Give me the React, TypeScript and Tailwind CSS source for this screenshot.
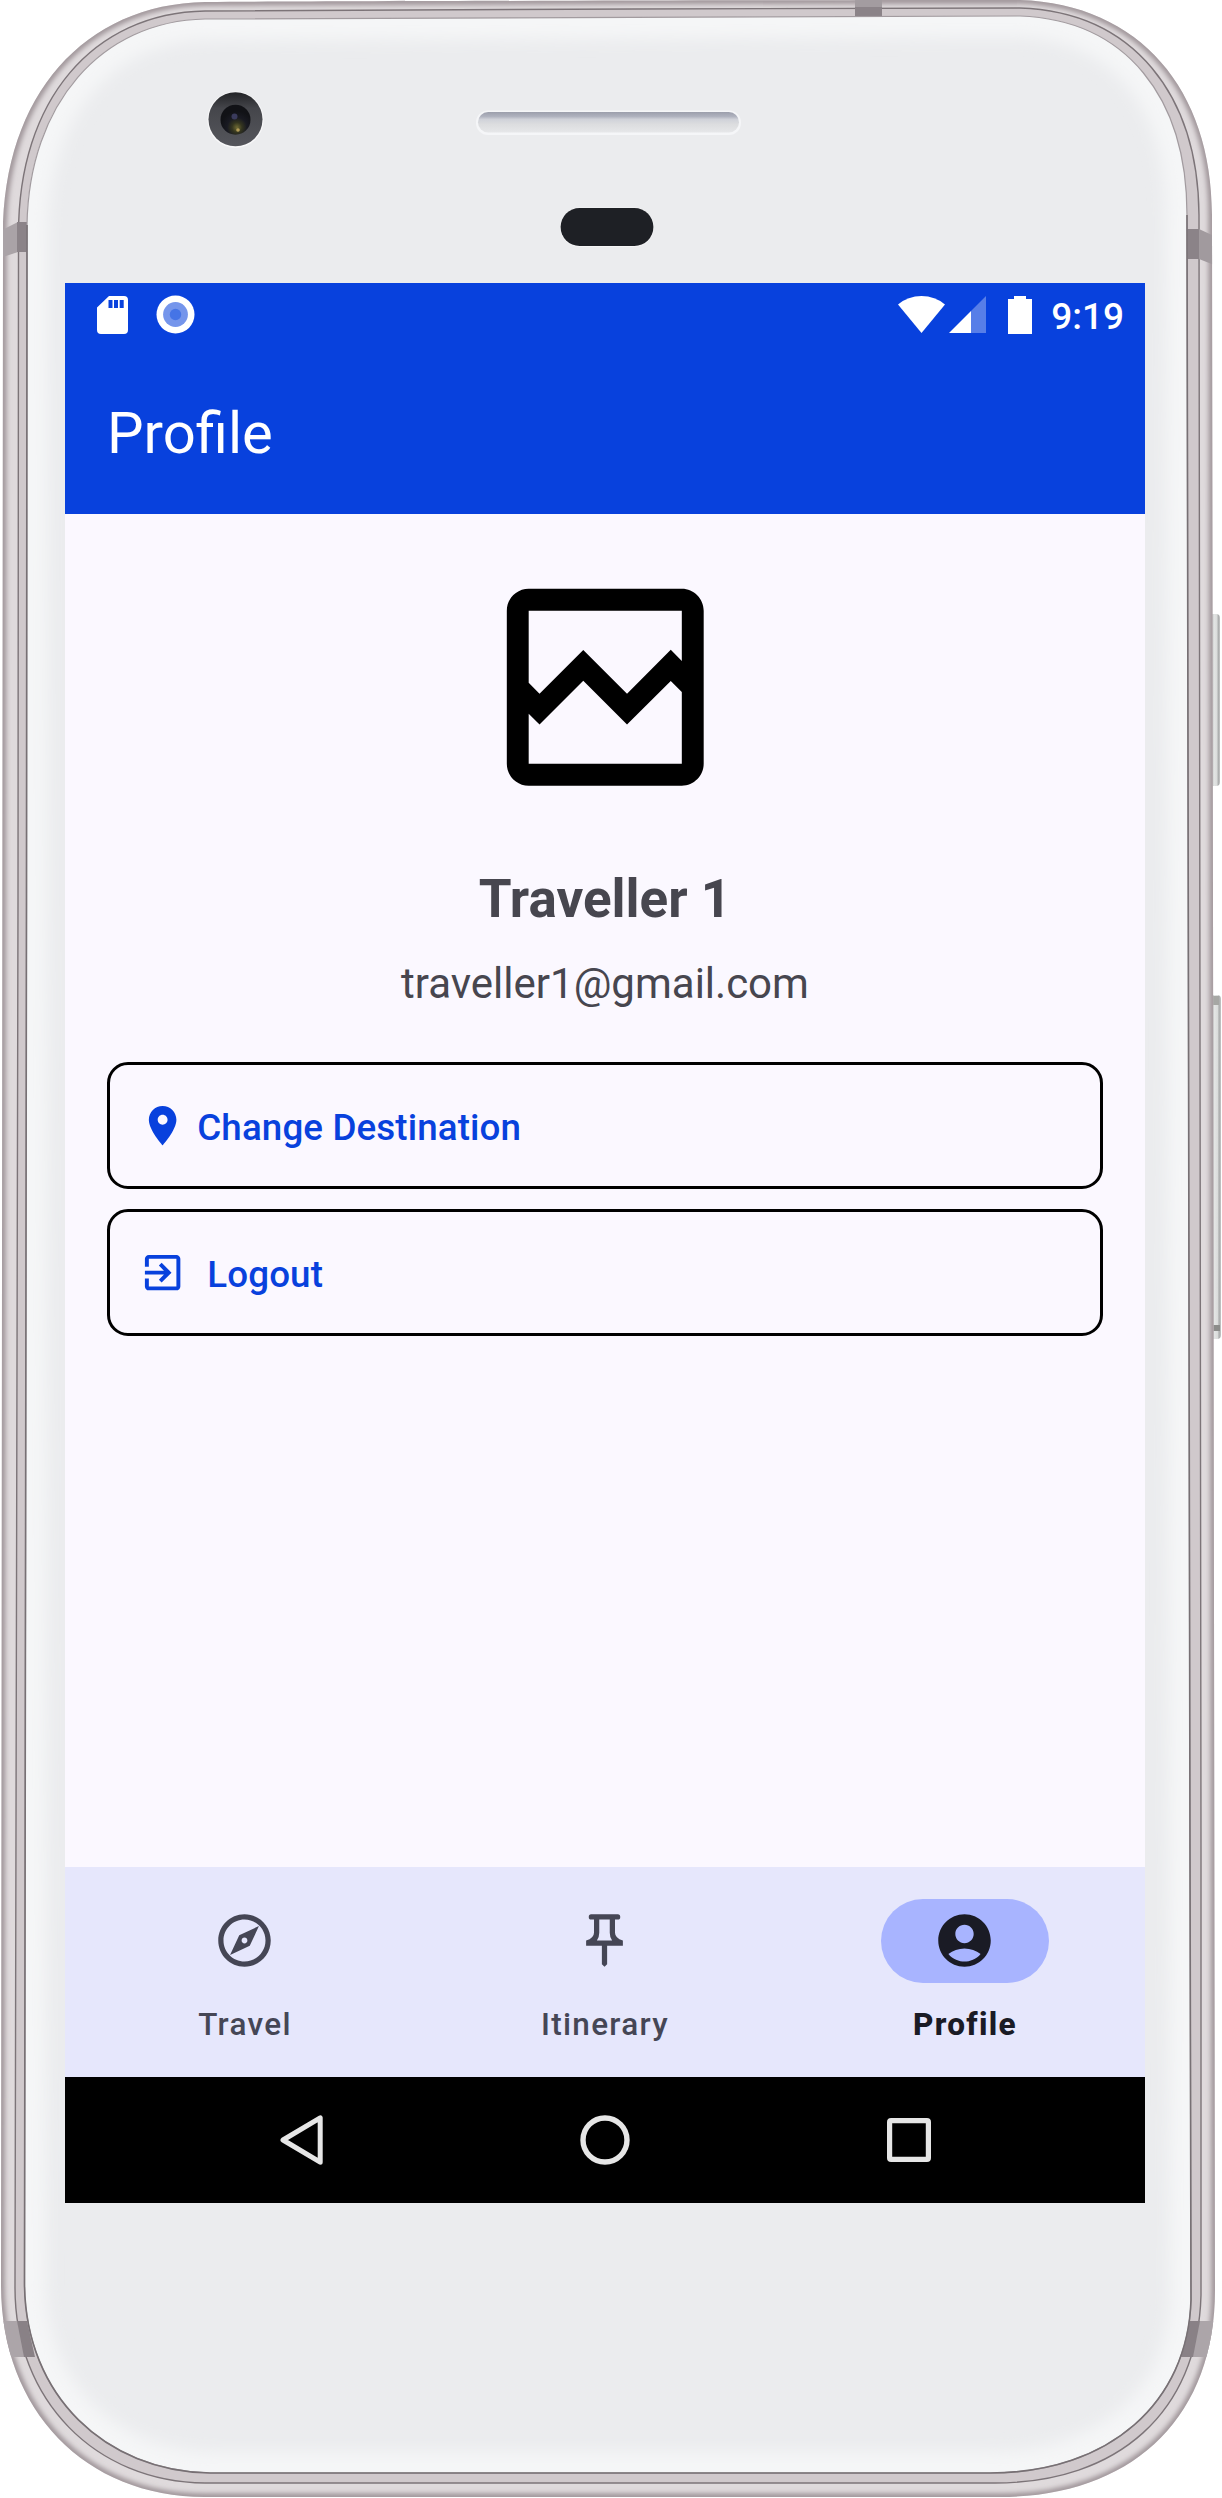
import React from "react";

const OUTER =
  "M205 2 C400 1 800 0 1020 0 C1140 4 1212 90 1212 215 L1213 900 L1215 2290 C1215 2420 1130 2497 1000 2497 L205 2497 C85 2497 1 2410 1 2285 L3 235 C3 95 85 4 205 2Z";
const SEAM =
  "M205 11 C400 11 800 7 1020 8 C1134 12 1198 95 1199 215 L1201 1850 L1201 2295 C1198 2412 1118 2483 995 2483 L205 2483 C95 2482 15 2400 15 2288 L18 900 L18.5 235 C18 100 93 13 205 11Z";
const FACE =
  "M205 19 C400 19 800 16 1020 16 C1126 20 1187 97 1187 215 L1190 1850 L1191 2300 C1188 2402 1110 2473 990 2473 L210 2473 C105 2471 26 2396 24.5 2285 L26.5 900 L27 225 C29 104 101 21 205 19Z";

function DeviceFrame() {
  return (
    <svg
      className="pointer-events-none absolute inset-0"
      width="1222"
      height="2498"
      viewBox="0 0 1222 2498"
      aria-hidden="true"
    >
      <defs>
        <filter id="soft" x="-5%" y="-5%" width="110%" height="110%">
          <feGaussianBlur stdDeviation="8" />
        </filter>
        <filter id="soft2" x="-5%" y="-5%" width="110%" height="110%">
          <feGaussianBlur stdDeviation="2.5" />
        </filter>
        <clipPath id="outerClip">
          <path d={OUTER} />
        </clipPath>
        <clipPath id="faceClip">
          <path d={FACE} />
        </clipPath>
        <linearGradient id="ear" x1="0" y1="0" x2="0" y2="1">
          <stop offset="0" stopColor="#9b9eab" />
          <stop offset="0.22" stopColor="#b0b3bf" />
          <stop offset="0.36" stopColor="#d0d2d9" />
          <stop offset="0.6" stopColor="#dcdddf" />
          <stop offset="1" stopColor="#e6e7e9" />
        </linearGradient>
        <linearGradient id="camera" x1="0" y1="0" x2="0" y2="1">
          <stop offset="0" stopColor="#222326" />
          <stop offset="0.3" stopColor="#45464b" />
          <stop offset="1" stopColor="#55565c" />
        </linearGradient>
        <radialGradient id="lens" cx="0.55" cy="0.76" r="0.55">
          <stop offset="0" stopColor="#6f6a33" />
          <stop offset="0.3" stopColor="#34351f" />
          <stop offset="0.6" stopColor="#191a22" />
          <stop offset="1" stopColor="#111216" />
        </radialGradient>
        <linearGradient id="key" x1="0" y1="0" x2="1" y2="0">
          <stop offset="0" stopColor="#9d9fa0" />
          <stop offset="0.4" stopColor="#c9cbcb" />
          <stop offset="0.5" stopColor="#e3e5e4" />
          <stop offset="0.75" stopColor="#dadcdb" />
          <stop offset="0.85" stopColor="#a9abab" />
          <stop offset="1" stopColor="#c5c6c6" />
        </linearGradient>
      </defs>

      {/* side keys */}
      <rect x="1208" y="614" width="12" height="172" rx="4" fill="url(#key)" />
      <rect x="1208" y="995" width="13" height="344" rx="4" fill="url(#key)" />
      <rect x="1212" y="996" width="7" height="9" fill="#a6a7a4" />
      <rect x="1212" y="1325" width="8" height="6" fill="#8b8c8a" />

      {/* metal rim */}
      <path d={OUTER} fill="#dfdadc" />
      <g clipPath="url(#outerClip)">
        <path d={OUTER} fill="none" stroke="#9c9296" strokeWidth="7" filter="url(#soft2)" />
        <path d="M180 2497 H1020" stroke="#8b8186" strokeWidth="16" filter="url(#soft2)" />
      </g>
      <path d={SEAM} fill="#d0c9cc" stroke="#7c7478" strokeWidth="1.4" />

      {/* antenna bands */}
      <g clipPath="url(#outerClip)">
        <path d="M0 231 L18 222 V252 L0 258Z" fill="#aaa3a7" />
        <path d="M17 222 H28 V252 H17Z" fill="#8b8388" />
        <path d="M1199 229 L1214 236 V265 L1199 259Z" fill="#a19a9e" />
        <path d="M1186 229 H1199 V259 H1186Z" fill="#8b8388" />
        <path d="M0 2321 H18 L25 2357 H0Z" fill="#aca5a9" />
        <path d="M17 2321 H27 L35 2357 H24Z" fill="#898186" />
        <path d="M1199 2321 H1220 V2357 H1192Z" fill="#aca5a9" />
        <path d="M1188 2321 H1200 L1193 2357 H1181Z" fill="#898186" />
        <path d="M855 0 H882 V7 H855Z" fill="#a39ca0" />
        <path d="M855 7 H882 V17 H855Z" fill="#8b8388" />
      </g>

      {/* front glass */}
      <path d={FACE} fill="#ebecee" />
      <g clipPath="url(#faceClip)">
        <path d={FACE} fill="none" stroke="#f5f6f7" strokeWidth="42" filter="url(#soft)" />
      </g>
      <path d={FACE} fill="none" stroke="#a29b9f" strokeWidth="1.2" />
      <path
        d="M1187 215 L1190 1850 L1191 2300 C1188 2402 1110 2473 990 2473 L210 2473 C105 2471 26 2396 24.5 2285 L26.5 900 L27 225"
        fill="none"
        stroke="#777074"
        strokeWidth="1.6"
      />

      {/* front camera */}
      <circle cx="235.5" cy="119.7" r="28.2" fill="#f8f8f9" />
      <circle cx="235.5" cy="119.3" r="27" fill="url(#camera)" />
      <circle cx="235.5" cy="119.7" r="15" fill="url(#lens)" />
      <circle cx="234.5" cy="116.5" r="3" fill="#3a3b5c" />
      <circle cx="238" cy="130" r="1.8" fill="#b39c58" />

      {/* earpiece */}
      <rect x="476" y="110.5" width="265" height="24.5" rx="12" fill="#f5f6f8" />
      <rect x="478" y="112" width="261" height="20.5" rx="10.2" fill="url(#ear)" />

      {/* proximity sensor */}
      <rect x="560" y="207.5" width="94" height="39.5" rx="19.7" fill="#f5f5f6" />
      <rect x="560.6" y="208" width="92.8" height="38" rx="19" fill="#1e2025" />
    </svg>
  );
}

function StatusBar() {
  return (
    <div className="flex h-[63px] items-center">
      <svg className="ml-8 shrink-0" width="31" height="38" viewBox="0 0 31 38" aria-hidden="true">
        <path
          fill="#fff"
          fillRule="evenodd"
          d="M12 0H27Q31 0 31 4V34Q31 38 27 38H4Q0 38 0 34V11.5ZM11.5 4V12H15.5V4ZM17 4V12H21V4ZM22.7 4V12H26.7V4Z"
        />
      </svg>
      <svg className="ml-7 shrink-0" width="39" height="39" viewBox="0 0 39 39" aria-hidden="true">
        <circle cx="19.5" cy="19.5" r="19" fill="#fff" />
        <circle cx="19.5" cy="19.5" r="12.4" fill="#7595eb" />
        <circle cx="19.5" cy="19.5" r="5.7" fill="#4574e6" />
      </svg>
      <svg className="ml-auto shrink-0" width="47" height="37" viewBox="0 0 47 37" aria-hidden="true">
        <path fill="#fff" d="M0 8.5Q10 0 23.5 0T47 8.5L23.5 37Z" />
      </svg>
      <svg className="ml-1 shrink-0" width="37" height="37" viewBox="0 0 37 37" aria-hidden="true">
        <path fill="#577ee8" d="M37 0V37H22V15Z" />
        <path fill="#fff" d="M22 15V37H0Z" />
      </svg>
      <svg className="ml-[22px] shrink-0" width="24" height="38" viewBox="0 0 24 38" aria-hidden="true">
        <path fill="#fff" d="M6 0H18V3H24V38H0V3H6Z" />
      </svg>
      <span className="mr-[20px] ml-[18px] w-[75px] pt-[4px] pr-[1px] text-right text-[37px] leading-[44px] font-medium text-white">
        9:19
      </span>
    </div>
  );
}

function ActionButton({
  label,
  path,
  gap,
}: {
  label: string;
  path: string;
  gap: string;
}) {
  return (
    <button
      type="button"
      className="flex h-[127px] w-full items-center rounded-[21px] border-[3px] border-black pl-[29px] text-[#0841dd]"
    >
      <svg width="47.25" height="47.25" viewBox="0 0 24 24" fill="currentColor" aria-hidden="true">
        <path d={path} />
      </svg>
      <span className={`${gap} pt-[5px] text-[36.75px] leading-[52px] font-medium tracking-[0.12px]`}>
        {label}
      </span>
    </button>
  );
}

function NavItem({
  label,
  active = false,
  children,
}: {
  label: string;
  active?: boolean;
  children: React.ReactNode;
}) {
  return (
    <div
      className={`flex w-[360px] flex-col items-center pt-8 ${active ? "text-[#1a1b25]" : "text-[#454655]"}`}
    >
      <div
        className={`flex h-[84px] w-[168px] items-center justify-center rounded-full pr-[2px] pb-[2px] ${active ? "bg-[#a8b4ff]" : ""}`}
      >
        <svg width="63" height="63" viewBox="0 0 24 24" fill="currentColor" aria-hidden="true">
          {children}
        </svg>
      </div>
      <span
        className={`mt-[21px] text-[31.5px] leading-[42px] tracking-[1.31px] ${active ? "font-extrabold" : "font-medium"}`}
      >
        {label}
      </span>
    </div>
  );
}

export default function App() {
  return (
    <div className="relative h-[2498px] w-[1222px] overflow-hidden bg-white pt-[283px] pl-[65px] font-['Roboto',sans-serif]">
      <DeviceFrame />
      <div className="relative flex h-[1920px] w-[1080px] flex-col bg-[#fbf8ff]">
        <header className="h-[231px] shrink-0 bg-[#0841dd]">
          <StatusBar />
          <h1 className="flex h-[168px] items-center pt-[6px] pl-[42px] text-[58px] font-normal text-white">
            Profile
          </h1>
        </header>

        <main className="flex flex-1 flex-col items-center px-[42px] pt-[42px] text-[#47464f]">
          <svg width="262.5" height="262.5" viewBox="0 0 24 24" fill="#000" className="shrink-0" aria-hidden="true">
            <path d="M19 3H5c-1.1 0-2 .9-2 2v14c0 1.1.9 2 2 2h14c1.1 0 2-.9 2-2V5c0-1.1-.9-2-2-2zm0 16H5v-4.58l.99.99 4-4 4 4 4-3.99L19 12.43V19zm0-9.41l-1.01-1.01-4 4.01-4-4-4 4-.99-1V5h14v4.59z" />
          </svg>
          <h2 className="mt-[38px] text-[53px] leading-[84px] font-bold">Traveller 1</h2>
          <p className="mt-[11px] text-[42px] leading-[63px]">traveller1@gmail.com</p>
          <div className="mt-[47.5px] flex w-full flex-col gap-5">
            <ActionButton
              label="Change Destination"
              gap="ml-[11px]"
              path="M12 2C8.13 2 5 5.13 5 9c0 5.25 7 13 7 13s7-7.75 7-13c0-3.87-3.13-7-7-7zm0 9.5c-1.38 0-2.5-1.12-2.5-2.5s1.12-2.5 2.5-2.5 2.5 1.12 2.5 2.5-1.12 2.5-2.5 2.5z"
            />
            <ActionButton
              label="Logout"
              gap="ml-[21px]"
              path="M10.09 15.59L11.5 17l5-5-5-5-1.41 1.41L12.67 11H3v2h9.67l-2.58 2.59zM19 3H5c-1.11 0-2 .9-2 2v4h2V5h14v14H5v-4H3v4c0 1.1.89 2 2 2h14c1.1 0 2-.9 2-2V5c0-1.1-.9-2-2-2z"
            />
          </div>
        </main>

        <nav className="flex h-[210px] shrink-0 bg-[#e6e7fc]">
          <NavItem label="Travel">
            <path d="M12 2C6.48 2 2 6.48 2 12s4.48 10 10 10 10-4.48 10-10S17.52 2 12 2zm0 18c-4.41 0-8-3.59-8-8s3.59-8 8-8 8 3.59 8 8-3.59 8-8 8zm-5.5-2.5l7.51-3.49L17.5 6.5 9.99 9.99 6.5 17.5zm5.5-6.6c.61 0 1.1.49 1.1 1.1s-.49 1.1-1.1 1.1-1.1-.49-1.1-1.1.49-1.1 1.1-1.1z" />
          </NavItem>
          <NavItem label="Itinerary">
            <path
              fillRule="evenodd"
              d="M6.9 2H17.1Q18 2 18 3T17.1 4H16V9Q16 11 19 12V14H13V21L12 22L11 21V14H5V12Q8 11 8 9V4H6.9Q6 4 6 3T6.9 2ZM10 4V9Q10 10.7 9.1 12H14.9Q14 10.7 14 9V4Z"
            />
          </NavItem>
          <NavItem label="Profile" active>
            <path d="M12,2C6.48,2 2,6.48 2,12s4.48,10 10,10 10,-4.48 10,-10S17.52,2 12,2zM12,6c1.93,0 3.5,1.57 3.5,3.5S13.93,13 12,13s-3.5,-1.57 -3.5,-3.5S10.07,6 12,6zM12,20c-2.03,0 -4.43,-0.82 -6.14,-2.88C7.55,15.8 9.68,15 12,15s4.45,0.8 6.14,2.12C16.43,19.18 14.03,20 12,20z" />
          </NavItem>
        </nav>

        <div className="flex h-[126px] shrink-0 items-center bg-black">
          <svg className="ml-[215px]" width="43" height="50" viewBox="0 0 43 50" fill="none" aria-hidden="true">
            <path d="M40.2 2.8V47.2L3 25Z" stroke="#e6e6e6" strokeWidth="5" strokeLinejoin="round" />
          </svg>
          <svg className="ml-[257px]" width="50" height="50" viewBox="0 0 50 50" fill="none" aria-hidden="true">
            <circle cx="25" cy="25" r="22" stroke="#e6e6e6" strokeWidth="5.4" />
          </svg>
          <svg className="ml-[257px]" width="44" height="44" viewBox="0 0 44 44" fill="none" aria-hidden="true">
            <rect x="2.6" y="2.6" width="38.8" height="38.8" rx="1.5" stroke="#e6e6e6" strokeWidth="5.2" />
          </svg>
        </div>
      </div>
    </div>
  );
}
